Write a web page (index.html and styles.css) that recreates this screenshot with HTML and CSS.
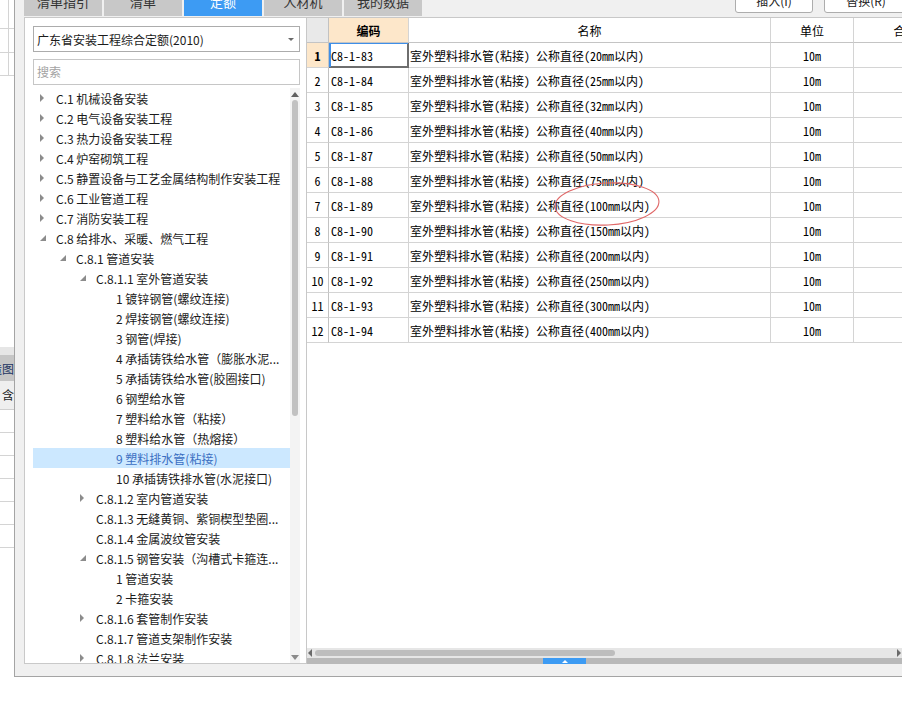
FILE: index.html
```html
<!DOCTYPE html>
<html lang="zh-CN">
<head>
<meta charset="utf-8">
<title>定额</title>
<link rel="stylesheet" href="styles.css">
</head>
<body>
<div class="screen">
  <aside class="bgapp">
    <div class="bg-row r1"><span class="bg-cell"></span></div>
    <div class="bg-row r2"><span class="bg-cell"></span></div>
    <div class="bg-row r3"><span class="bg-cell"></span></div>
    <div class="bg-gap"></div>
    <div class="bg-band"></div>
    <div class="bg-tab"><span>构造图</span></div>
    <div class="bg-head">含量</div>
    <div class="bg-line"></div>
    <div class="bg-line"></div>
    <div class="bg-line"></div>
    <div class="bg-line"></div>
    <div class="bg-line"></div>
    <div class="bg-line"></div>
  </aside>

  <section class="dialog">
    <header class="topbar">
      <nav class="tabs">
        <div class="tab"><span>清单指引</span></div>
        <div class="tab"><span>清单</span></div>
        <div class="tab active"><span>定额</span></div>
        <div class="tab"><span>人材机</span></div>
        <div class="tab"><span>我的数据</span></div>
      </nav>
      <div class="actions">
        <button class="btn">插入(I)</button>
        <button class="btn wide">替换(R)</button>
      </div>
    </header>

    <div class="main">
      <div class="lib">
        <div class="select"><span>广东省安装工程综合定额(2010)</span><i class="caret"></i></div>
        <div class="search">搜索</div>
        <div class="treebox">
          <div class="tree">
            <div class="node l1"><i class="tw closed"></i><span>C.1 机械设备安装</span></div>
            <div class="node l1"><i class="tw closed"></i><span>C.2 电气设备安装工程</span></div>
            <div class="node l1"><i class="tw closed"></i><span>C.3 热力设备安装工程</span></div>
            <div class="node l1"><i class="tw closed"></i><span>C.4 炉窑砌筑工程</span></div>
            <div class="node l1"><i class="tw closed"></i><span>C.5 静置设备与工艺金属结构制作安装工程</span></div>
            <div class="node l1"><i class="tw closed"></i><span>C.6 工业管道工程</span></div>
            <div class="node l1"><i class="tw closed"></i><span>C.7 消防安装工程</span></div>
            <div class="node l1"><i class="tw open"></i><span>C.8 给排水、采暖、燃气工程</span></div>
            <div class="node l2"><i class="tw open"></i><span>C.8.1 管道安装</span></div>
            <div class="node l3"><i class="tw open"></i><span>C.8.1.1 室外管道安装</span></div>
            <div class="node l4"><i class="tw"></i><span>1 镀锌钢管(螺纹连接)</span></div>
            <div class="node l4"><i class="tw"></i><span>2 焊接钢管(螺纹连接)</span></div>
            <div class="node l4"><i class="tw"></i><span>3 钢管(焊接)</span></div>
            <div class="node l4"><i class="tw"></i><span>4 承插铸铁给水管（膨胀水泥...</span></div>
            <div class="node l4"><i class="tw"></i><span>5 承插铸铁给水管(胶圈接口)</span></div>
            <div class="node l4"><i class="tw"></i><span>6 钢塑给水管</span></div>
            <div class="node l4"><i class="tw"></i><span>7 塑料给水管（粘接）</span></div>
            <div class="node l4"><i class="tw"></i><span>8 塑料给水管（热熔接）</span></div>
            <div class="node l4 sel"><i class="tw"></i><span>9 塑料排水管(粘接)</span></div>
            <div class="node l4"><i class="tw"></i><span>10 承插铸铁排水管(水泥接口)</span></div>
            <div class="node l3"><i class="tw closed"></i><span>C.8.1.2 室内管道安装</span></div>
            <div class="node l3"><i class="tw"></i><span>C.8.1.3 无缝黄铜、紫铜楔型垫圈...</span></div>
            <div class="node l3"><i class="tw"></i><span>C.8.1.4 金属波纹管安装</span></div>
            <div class="node l3"><i class="tw open"></i><span>C.8.1.5 钢管安装（沟槽式卡箍连...</span></div>
            <div class="node l4"><i class="tw"></i><span>1 管道安装</span></div>
            <div class="node l4"><i class="tw"></i><span>2 卡箍安装</span></div>
            <div class="node l3"><i class="tw closed"></i><span>C.8.1.6 套管制作安装</span></div>
            <div class="node l3"><i class="tw"></i><span>C.8.1.7 管道支架制作安装</span></div>
            <div class="node l3"><i class="tw closed"></i><span>C.8.1.8 法兰安装</span></div>
          </div>
          <div class="vscroll">
            <i class="arr-up"></i>
            <div class="vtrack"><div class="vthumb"></div></div>
            <i class="arr-down"></i>
          </div>
        </div>
      </div>

      <div class="gridpanel">
        <div class="grid">
          <div class="grow head">
            <div class="c no"></div>
            <div class="c code">编码</div>
            <div class="c name">名称</div>
            <div class="c unit">单位</div>
            <div class="c more">合价</div>
          </div>
          <div class="grow">
            <div class="c no cur">1</div>
            <div class="c code focus">C8-1-83</div>
            <div class="c name">室外塑料排水管(粘接) 公称直径(20mm以内)</div>
            <div class="c unit">10m</div>
            <div class="c more"></div>
          </div>
          <div class="grow">
            <div class="c no">2</div>
            <div class="c code">C8-1-84</div>
            <div class="c name">室外塑料排水管(粘接) 公称直径(25mm以内)</div>
            <div class="c unit">10m</div>
            <div class="c more"></div>
          </div>
          <div class="grow">
            <div class="c no">3</div>
            <div class="c code">C8-1-85</div>
            <div class="c name">室外塑料排水管(粘接) 公称直径(32mm以内)</div>
            <div class="c unit">10m</div>
            <div class="c more"></div>
          </div>
          <div class="grow">
            <div class="c no">4</div>
            <div class="c code">C8-1-86</div>
            <div class="c name">室外塑料排水管(粘接) 公称直径(40mm以内)</div>
            <div class="c unit">10m</div>
            <div class="c more"></div>
          </div>
          <div class="grow">
            <div class="c no">5</div>
            <div class="c code">C8-1-87</div>
            <div class="c name">室外塑料排水管(粘接) 公称直径(50mm以内)</div>
            <div class="c unit">10m</div>
            <div class="c more"></div>
          </div>
          <div class="grow">
            <div class="c no">6</div>
            <div class="c code">C8-1-88</div>
            <div class="c name">室外塑料排水管(粘接) 公称直径(75mm以内)</div>
            <div class="c unit">10m</div>
            <div class="c more"></div>
          </div>
          <div class="grow">
            <div class="c no">7</div>
            <div class="c code">C8-1-89</div>
            <div class="c name">室外塑料排水管(粘接) 公称直径(100mm以内)</div>
            <div class="c unit">10m</div>
            <div class="c more"></div>
          </div>
          <div class="grow">
            <div class="c no">8</div>
            <div class="c code">C8-1-90</div>
            <div class="c name">室外塑料排水管(粘接) 公称直径(150mm以内)</div>
            <div class="c unit">10m</div>
            <div class="c more"></div>
          </div>
          <div class="grow">
            <div class="c no">9</div>
            <div class="c code">C8-1-91</div>
            <div class="c name">室外塑料排水管(粘接) 公称直径(200mm以内)</div>
            <div class="c unit">10m</div>
            <div class="c more"></div>
          </div>
          <div class="grow">
            <div class="c no">10</div>
            <div class="c code">C8-1-92</div>
            <div class="c name">室外塑料排水管(粘接) 公称直径(250mm以内)</div>
            <div class="c unit">10m</div>
            <div class="c more"></div>
          </div>
          <div class="grow">
            <div class="c no">11</div>
            <div class="c code">C8-1-93</div>
            <div class="c name">室外塑料排水管(粘接) 公称直径(300mm以内)</div>
            <div class="c unit">10m</div>
            <div class="c more"></div>
          </div>
          <div class="grow">
            <div class="c no">12</div>
            <div class="c code">C8-1-94</div>
            <div class="c name">室外塑料排水管(粘接) 公称直径(400mm以内)</div>
            <div class="c unit">10m</div>
            <div class="c more"></div>
          </div>
        </div>
        <div class="gridfill"></div>
        <div class="hscroll">
          <i class="arr-left"></i>
          <div class="hthumb"></div>
          <i class="arr-right"></i>
        </div>
        <div class="splitter"><div class="handle"><i class="handle-arrow"></i></div></div>
        <svg class="mark" width="120" height="56" viewBox="0 0 120 56">
          <ellipse cx="60" cy="28" rx="52" ry="21" transform="rotate(-3 60 28)" fill="none" stroke="#e06868" stroke-width="1.1"/>
        </svg>
      </div>
    </div>

    <footer class="dfoot"></footer>
  </section>
</div>
</body>
</html>
```

FILE: styles.css
```css
* { box-sizing: border-box; }

html, body { margin: 0; padding: 0; }

body {
  width: 902px;
  height: 720px;
  overflow: hidden;
  background: #ffffff;
  font-family: "Noto Sans CJK SC", "Microsoft YaHei", sans-serif;
  font-size: 12px;
  color: #1b1b1b;
}

.screen {
  display: flex;
  height: 677px;
}

/* background application strip on the far left */
.bgapp {
  width: 14px;
  flex: none;
  overflow: hidden;
  display: flex;
  flex-direction: column;
  background: #ffffff;
}
.bg-row { display: flex; flex: none; border-bottom: 1px solid #d4d4d4; }
.bg-row.r1 { height: 29px; }
.bg-row.r2 { height: 24px; }
.bg-row.r3 { height: 23px; }
.bg-cell { width: 9px; border-right: 1px solid #d4d4d4; }
.bg-gap { height: 271px; flex: none; }
.bg-band { height: 8px; flex: none; background: #e6e6e6; }
.bg-tab {
  height: 26px;
  flex: none;
  background: #c6c6c6;
  display: flex;
  justify-content: flex-end;
  align-items: center;
  white-space: nowrap;
  color: #1d3562;
  font-size: 12px;
}
.bg-head {
  height: 29px;
  flex: none;
  background: #efefef;
  border-bottom: 1px solid #d0d0d0;
  white-space: nowrap;
  padding-left: 2px;
  line-height: 28px;
  color: #222;
}
.bg-line { height: 23px; flex: none; border-bottom: 1px solid #d4d4d4; }

/* dialog */
.dialog {
  flex: 1;
  min-width: 0;
  border-left: 1px solid #a4a4a4;
  border-bottom: 1px solid #a4a4a4;
  background: #f0f0f0;
  display: flex;
  flex-direction: column;
  overflow: hidden;
  padding-left: 9px;
}

.topbar {
  height: 17px;
  flex: none;
  display: flex;
  overflow: hidden;
}
.tabs { display: flex; gap: 2px; height: 16px; }
.tab {
  width: 78px;
  height: 16px;
  background: #c8c8c8;
  color: #333333;
  font-size: 13px;
  text-align: center;
  line-height: 16px;
  overflow: hidden;
}
.tab span { display: block; margin-top: -6px; }
.tab.active { background: #3d9bf3; color: #ffffff; }

.actions {
  margin-left: auto;
  margin-right: -6px;
  display: flex;
  gap: 11px;
}
.btn {
  width: 78px;
  height: 25px;
  margin-top: -12px;
  padding: 0;
  border: 1px solid #adadad;
  border-radius: 3px;
  background: #ffffff;
  font-family: "Noto Sans CJK SC", sans-serif;
  font-size: 12px;
  line-height: 23px;
  color: #222222;
  text-align: center;
}
.btn.wide { width: 84px; }

.main {
  display: flex;
  height: 647px;
  flex: none;
}

/* left library panel */
.lib {
  width: 282px;
  flex: none;
  background: #ffffff;
  border: 1px solid #c9c9c9;
  border-right: none;
  display: flex;
  flex-direction: column;
  padding: 8px 6px 0 8px;
}
.select {
  height: 26px;
  flex: none;
  border: 1px solid #acacac;
  display: flex;
  align-items: center;
  padding-left: 3px;
  color: #1b1b1b;
}
.caret {
  margin-left: auto;
  margin-right: 5px;
  width: 0;
  height: 0;
  border-top: 3px solid #6a6a6a;
  border-left: 3px solid transparent;
  border-right: 3px solid transparent;
}
.search {
  height: 26px;
  flex: none;
  margin-top: 7px;
  border: 1px solid #c6c6c6;
  color: #a3a3a3;
  padding-left: 3px;
  line-height: 24px;
}
.treebox {
  margin-top: 3px;
  flex: 1;
  min-height: 0;
  display: flex;
  overflow: hidden;
}
.tree { flex: 1; min-width: 0; overflow: hidden; }
.node {
  height: 20px;
  display: flex;
  align-items: center;
  white-space: nowrap;
  overflow: hidden;
}
.node.l1 { padding-left: 7px; }
.node.l2 { padding-left: 27px; }
.node.l3 { padding-left: 47px; }
.node.l4 { padding-left: 67px; }
.node.sel { background: #cce8ff; color: #3b6fc2; }
.tw {
  width: 16px;
  height: 20px;
  flex: none;
  display: flex;
  align-items: center;
}
.tw.closed::before {
  content: "";
  width: 0;
  height: 0;
  border-left: 4px solid #8c8c8c;
  border-top: 4px solid transparent;
  border-bottom: 4px solid transparent;
}
.tw.open::before {
  content: "";
  width: 0;
  height: 0;
  border-left: 6px solid transparent;
  border-bottom: 6px solid #8c8c8c;
}

.vscroll {
  width: 10px;
  flex: none;
  background: #f3f3f3;
  display: flex;
  flex-direction: column;
  align-items: center;
}
.arr-up {
  margin-top: 4px;
  width: 0;
  height: 0;
  border-bottom: 5px solid #5f5f5f;
  border-left: 4px solid transparent;
  border-right: 4px solid transparent;
}
.arr-down {
  margin-bottom: 3px;
  width: 0;
  height: 0;
  border-top: 5px solid #8a8a8a;
  border-left: 4px solid transparent;
  border-right: 4px solid transparent;
}
.vtrack { flex: 1; margin-top: 3px; }
.vthumb { width: 6px; height: 316px; border-radius: 3px; background: #c1c1c1; }

/* right grid panel */
.gridpanel {
  position: relative;
  flex: 1;
  min-width: 0;
  background: #ffffff;
  border-top: 1px solid #c8c8c8;
  border-left: 1px solid #c8c8c8;
  display: flex;
  flex-direction: column;
  overflow: hidden;
}
.grid { flex: none; }
.grow { display: flex; height: 25px; }
.c {
  flex: none;
  height: 25px;
  border-right: 1px solid #d4d4d4;
  border-bottom: 1px solid #d4d4d4;
  display: flex;
  align-items: center;
  white-space: nowrap;
  overflow: hidden;
  font-family: "Noto Sans Mono CJK SC", "Noto Sans CJK SC", monospace;
  font-size: 12px;
  color: #000000;
}
.c.no { width: 22px; justify-content: center; border-right-color: #c2c2c2; }
.c.code { width: 80px; padding-left: 2px; }
.c.name { width: 362px; padding-left: 1px; }
.c.unit { width: 83px; justify-content: center; }
.c.more { width: 104px; justify-content: center; }

.head .c {
  justify-content: center;
  padding-left: 0;
  border-bottom-color: #c4c4c4;
  font-family: "Noto Sans CJK SC", sans-serif;
}
.head .c.no { background: #e9e9e9; }
.head .c.code { background: #fde7ca; font-weight: bold; }

.c.no.cur { background: #fde7ca; font-weight: bold; }
.c.code.focus {
  border-right-color: #6e6e6e;
  border-bottom-color: #6e6e6e;
  box-shadow: inset 2px 1px 0 #3f8fe8, inset -1px -1px 0 #6e6e6e;
}

.gridfill { flex: 1; }

.hscroll {
  height: 10px;
  flex: none;
  background: #e6e6e6;
  display: flex;
  align-items: center;
  padding: 0 1px 0 1px;
}
.arr-left {
  width: 0;
  height: 0;
  border-right: 4px solid #6a6a6a;
  border-top: 4px solid transparent;
  border-bottom: 4px solid transparent;
}
.arr-right {
  margin-left: auto;
  width: 0;
  height: 0;
  border-left: 4px solid #6a6a6a;
  border-top: 4px solid transparent;
  border-bottom: 4px solid transparent;
}
.hthumb {
  margin-left: 3px;
  width: 300px;
  height: 6px;
  border-radius: 3px;
  background: #bdbdbd;
}

.splitter {
  height: 6px;
  flex: none;
  background: #b9b9b9;
  display: flex;
  padding-left: 236px;
}
.handle {
  width: 43px;
  height: 6px;
  background: #3d9bf3;
  display: flex;
  justify-content: center;
  align-items: center;
}
.handle-arrow {
  width: 0;
  height: 0;
  border-bottom: 3px solid #ffffff;
  border-left: 3px solid transparent;
  border-right: 3px solid transparent;
}

/* hand-drawn annotation over the grid */
.mark {
  position: absolute;
  left: 240px;
  top: 158px;
}

.dfoot { height: 12px; flex: none; }
```
